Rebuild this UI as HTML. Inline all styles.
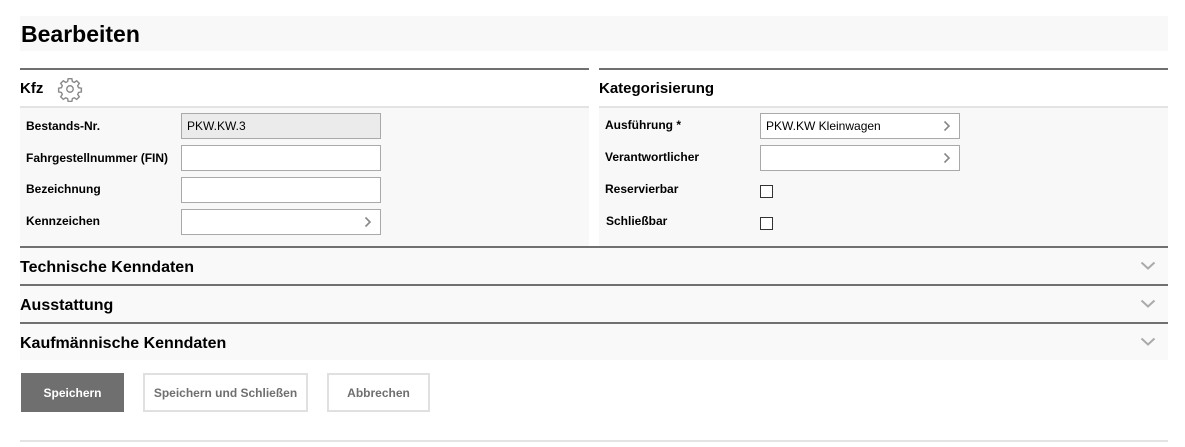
<!DOCTYPE html>
<html><head><meta charset="utf-8"><style>
*{margin:0;padding:0;box-sizing:border-box}
body{width:1185px;height:447px;background:#fff;font-family:"Liberation Sans",Arial,sans-serif;color:#000;position:relative;overflow:hidden}
.a{position:absolute}
.lbl{position:absolute;font-size:12px;font-weight:bold}
.inp{position:absolute;width:200px;height:26px;border:1px solid #a9a9a9;background:#fff;font-size:12px;padding:5px 0 0 5px}
.chev{position:absolute;right:8px;top:6px}
.cb{position:absolute;width:13px;height:13px;border:1px solid #333;background:#fff}
.acc{position:absolute;left:20px;width:1148px;height:36px;background:#f9f9f9;font-size:16px;font-weight:bold;padding:11px 0 0 0}
.line{position:absolute;left:20px;width:1148px;height:2px;background:#707070}
.btn{position:absolute;top:373px;height:39px;font-size:12px;font-weight:bold;text-align:center;line-height:37px;border:2px solid #e0e0e0;color:#6f6f6f;background:#fff}
</style></head><body>
<div class="a" style="left:20px;top:16px;width:1148px;height:35px;background:#f8f8f8"></div>
<div class="a" style="left:21px;top:21px;font-size:23px;font-weight:bold">Bearbeiten</div>

<div class="a" style="left:20px;top:68px;width:569px;height:2px;background:#707070"></div>
<div class="a" style="left:599px;top:68px;width:569px;height:2px;background:#707070"></div>
<div class="a" style="left:20px;top:106px;width:569px;height:2px;background:#e3e3e3"></div>
<div class="a" style="left:599px;top:106px;width:569px;height:2px;background:#e3e3e3"></div>
<div class="a" style="left:20px;top:108px;width:569px;height:138px;background:#f8f8f8"></div>
<div class="a" style="left:599px;top:108px;width:569px;height:138px;background:#f8f8f8"></div>

<div class="a" style="left:20px;top:80px;font-size:15px;font-weight:bold">Kfz</div>
<svg class="a" style="left:57px;top:76px" width="26" height="26" viewBox="0 0 24 24" fill="none" stroke="#8a8a8a" stroke-width="1.3"><circle cx="12" cy="12" r="3"/><path d="M10.3 2.5h3.4l.5 2.6 1.8.8 2.2-1.5 2.4 2.4-1.5 2.2.8 1.8 2.6.5v3.4l-2.6.5-.8 1.8 1.5 2.2-2.4 2.4-2.2-1.5-1.8.8-.5 2.6h-3.4l-.5-2.6-1.8-.8-2.2 1.5-2.4-2.4 1.5-2.2-.8-1.8-2.6-.5v-3.4l2.6-.5.8-1.8-1.5-2.2 2.4-2.4 2.2 1.5 1.8-.8z"/></svg>
<div class="a" style="left:599px;top:80px;font-size:15px;font-weight:bold">Kategorisierung</div>

<div class="lbl" style="left:26px;top:119px">Bestands-Nr.</div>
<div class="lbl" style="left:26px;top:151px">Fahrgestellnummer (FIN)</div>
<div class="lbl" style="left:26px;top:182px">Bezeichnung</div>
<div class="lbl" style="left:26px;top:214px">Kennzeichen</div>
<div class="inp" style="left:181px;top:113px;background:#ebebeb">PKW.KW.3</div>
<div class="inp" style="left:181px;top:145px"></div>
<div class="inp" style="left:181px;top:177px"></div>
<div class="inp" style="left:181px;top:209px"><svg class="chev" width="8" height="12" viewBox="0 0 8 12"><path d="M1.5 1.5l4.5 4.5-4.5 4.5" stroke="#888" stroke-width="1.6" fill="none"/></svg></div>

<div class="lbl" style="left:605px;top:118px">Ausführung *</div>
<div class="lbl" style="left:605px;top:150px">Verantwortlicher</div>
<div class="lbl" style="left:605px;top:182px">Reservierbar</div>
<div class="lbl" style="left:606px;top:214px">Schließbar</div>
<div class="inp" style="left:760px;top:113px;padding-left:5px">PKW.KW Kleinwagen<svg class="chev" width="8" height="12" viewBox="0 0 8 12"><path d="M1.5 1.5l4.5 4.5-4.5 4.5" stroke="#888" stroke-width="1.6" fill="none"/></svg></div>
<div class="inp" style="left:760px;top:145px"><svg class="chev" width="8" height="12" viewBox="0 0 8 12"><path d="M1.5 1.5l4.5 4.5-4.5 4.5" stroke="#888" stroke-width="1.6" fill="none"/></svg></div>
<div class="cb" style="left:760px;top:185px"></div>
<div class="cb" style="left:760px;top:217px"></div>

<div class="line" style="top:246px"></div>
<div class="acc" style="top:248px">Technische Kenndaten</div>
<div class="line" style="top:284px"></div>
<div class="acc" style="top:286px">Ausstattung</div>
<div class="line" style="top:322px"></div>
<div class="acc" style="top:324px">Kaufmännische Kenndaten</div>
<svg class="a" style="left:1140px;top:261px" width="16" height="10" viewBox="0 0 16 10"><path d="M1.5 1.5l6.5 6 6.5-6" stroke="#aaa" stroke-width="2" fill="none"/></svg>
<svg class="a" style="left:1140px;top:299px" width="16" height="10" viewBox="0 0 16 10"><path d="M1.5 1.5l6.5 6 6.5-6" stroke="#aaa" stroke-width="2" fill="none"/></svg>
<svg class="a" style="left:1140px;top:337px" width="16" height="10" viewBox="0 0 16 10"><path d="M1.5 1.5l6.5 6 6.5-6" stroke="#aaa" stroke-width="2" fill="none"/></svg>

<div class="btn" style="left:21px;width:103px;background:#6f6f6f;border-color:#6f6f6f;color:#fff">Speichern</div>
<div class="btn" style="left:143px;width:165px">Speichern und Schließen</div>
<div class="btn" style="left:327px;width:103px">Abbrechen</div>
<div class="a" style="left:20px;top:440px;width:1148px;height:2px;background:#e3e3e3"></div>
</body></html>
